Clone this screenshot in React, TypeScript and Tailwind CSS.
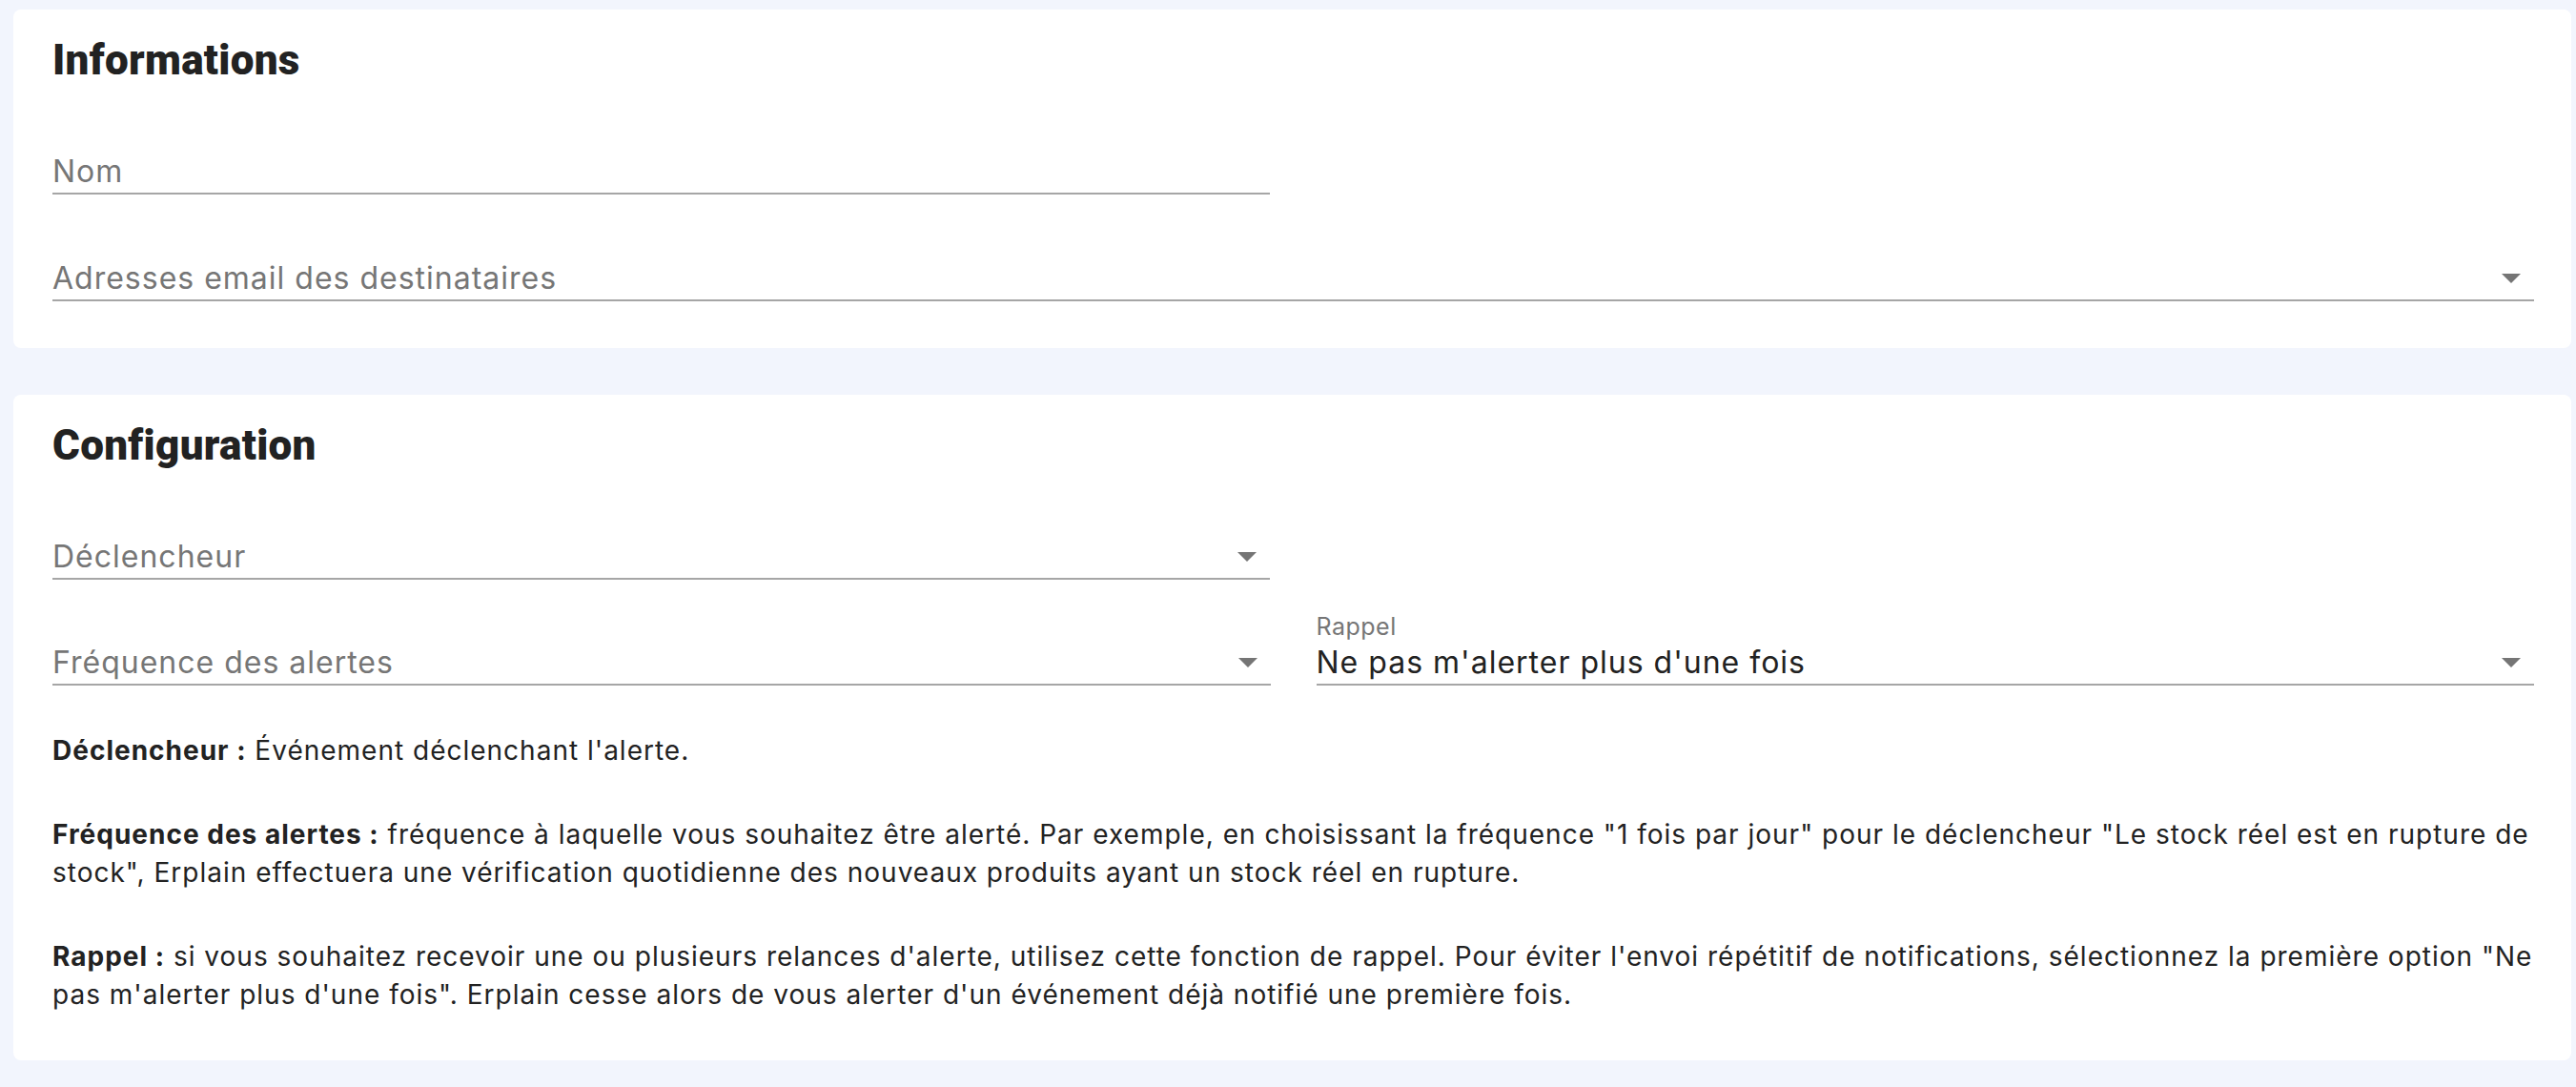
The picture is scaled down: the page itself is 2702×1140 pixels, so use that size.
import React from "react";

const Arrow = () => (
  <svg width="20" height="10" viewBox="0 0 20 10" className="shrink-0">
    <path d="M0 0 L20 0 L10 10 Z" fill="#757575" />
  </svg>
);

function Field({
  placeholder,
  arrow,
}: {
  placeholder: string;
  arrow?: boolean;
}) {
  return (
    <div className="h-[60px] border-b-2 border-[#a6a6a6] flex items-end justify-between pb-[7px]">
      <span className="text-[32px] leading-[30px] tracking-[1px] text-[#767676]">{placeholder}</span>
      {arrow && (
        <span className="mb-[10px] mr-[14px]">
          <Arrow />
        </span>
      )}
    </div>
  );
}

function Heading({ children }: { children: React.ReactNode }) {
  return (
    <h2 className="text-[44px] leading-[48px] font-black tracking-[0.3px] text-[#222222] font-['Roboto',sans-serif]">
      {children}
    </h2>
  );
}

export default function App() {
  return (
    <div className="min-h-screen bg-[#f2f5fd] pl-[14px] pr-[5px] pt-[10px] pb-[28px] flex flex-col gap-[49px] font-['Inter',sans-serif]">
      <section className="bg-white rounded-[8px] pl-[41px] pr-[39px] pt-[29px] pb-[49px]">
        <Heading>Informations</Heading>
        <div className="mt-[57px] w-[1277px]">
          <Field placeholder="Nom" />
        </div>
        <div className="mt-[52px]">
          <Field placeholder="Adresses email des destinataires" arrow />
        </div>
      </section>

      <section className="bg-white rounded-[8px] pl-[41px] pr-[39px] pt-[29px] pb-[49px]">
        <Heading>Configuration</Heading>
        <div className="mt-[57px] w-[1277px]">
          <Field placeholder="Déclencheur" arrow />
        </div>
        <div className="mt-[37px] grid grid-cols-2 gap-x-[48px] items-end">
          <Field placeholder="Fréquence des alertes" arrow />
          <div className="flex flex-col">
            <span className="text-[25px] leading-[24px] tracking-[0.5px] text-[#767676]">Rappel</span>
            <div className="h-[50px] border-b-2 border-[#a6a6a6] flex items-end justify-between pb-[7px]">
              <span className="text-[32px] leading-[30px] tracking-[1px] text-[#222222]">Ne pas m'alerter plus d'une fois</span>
              <span className="mb-[10px] mr-[14px]">
                <Arrow />
              </span>
            </div>
          </div>
        </div>

        <div className="mt-[48px] text-[28px] leading-[40px] tracking-[1px] text-[#222222] flex flex-col gap-[48px]">
          <p>
            <b className="font-bold">Déclencheur :</b> Événement déclenchant l'alerte.
          </p>
          <p>
            <span className="block whitespace-nowrap">
              <b className="font-bold">Fréquence des alertes :</b> fréquence à laquelle vous souhaitez être alerté. Par exemple, en choisissant la fréquence "1 fois par jour" pour le déclencheur "Le stock réel est en rupture de
            </span>
            <span className="block whitespace-nowrap">
              stock", Erplain effectuera une vérification quotidienne des nouveaux produits ayant un stock réel en rupture.
            </span>
          </p>
          <p>
            <span className="block whitespace-nowrap">
              <b className="font-bold">Rappel :</b> si vous souhaitez recevoir une ou plusieurs relances d'alerte, utilisez cette fonction de rappel. Pour éviter l'envoi répétitif de notifications, sélectionnez la première option "Ne
            </span>
            <span className="block whitespace-nowrap">
              pas m'alerter plus d'une fois". Erplain cesse alors de vous alerter d'un événement déjà notifié une première fois.
            </span>
          </p>
        </div>
      </section>
    </div>
  );
}
